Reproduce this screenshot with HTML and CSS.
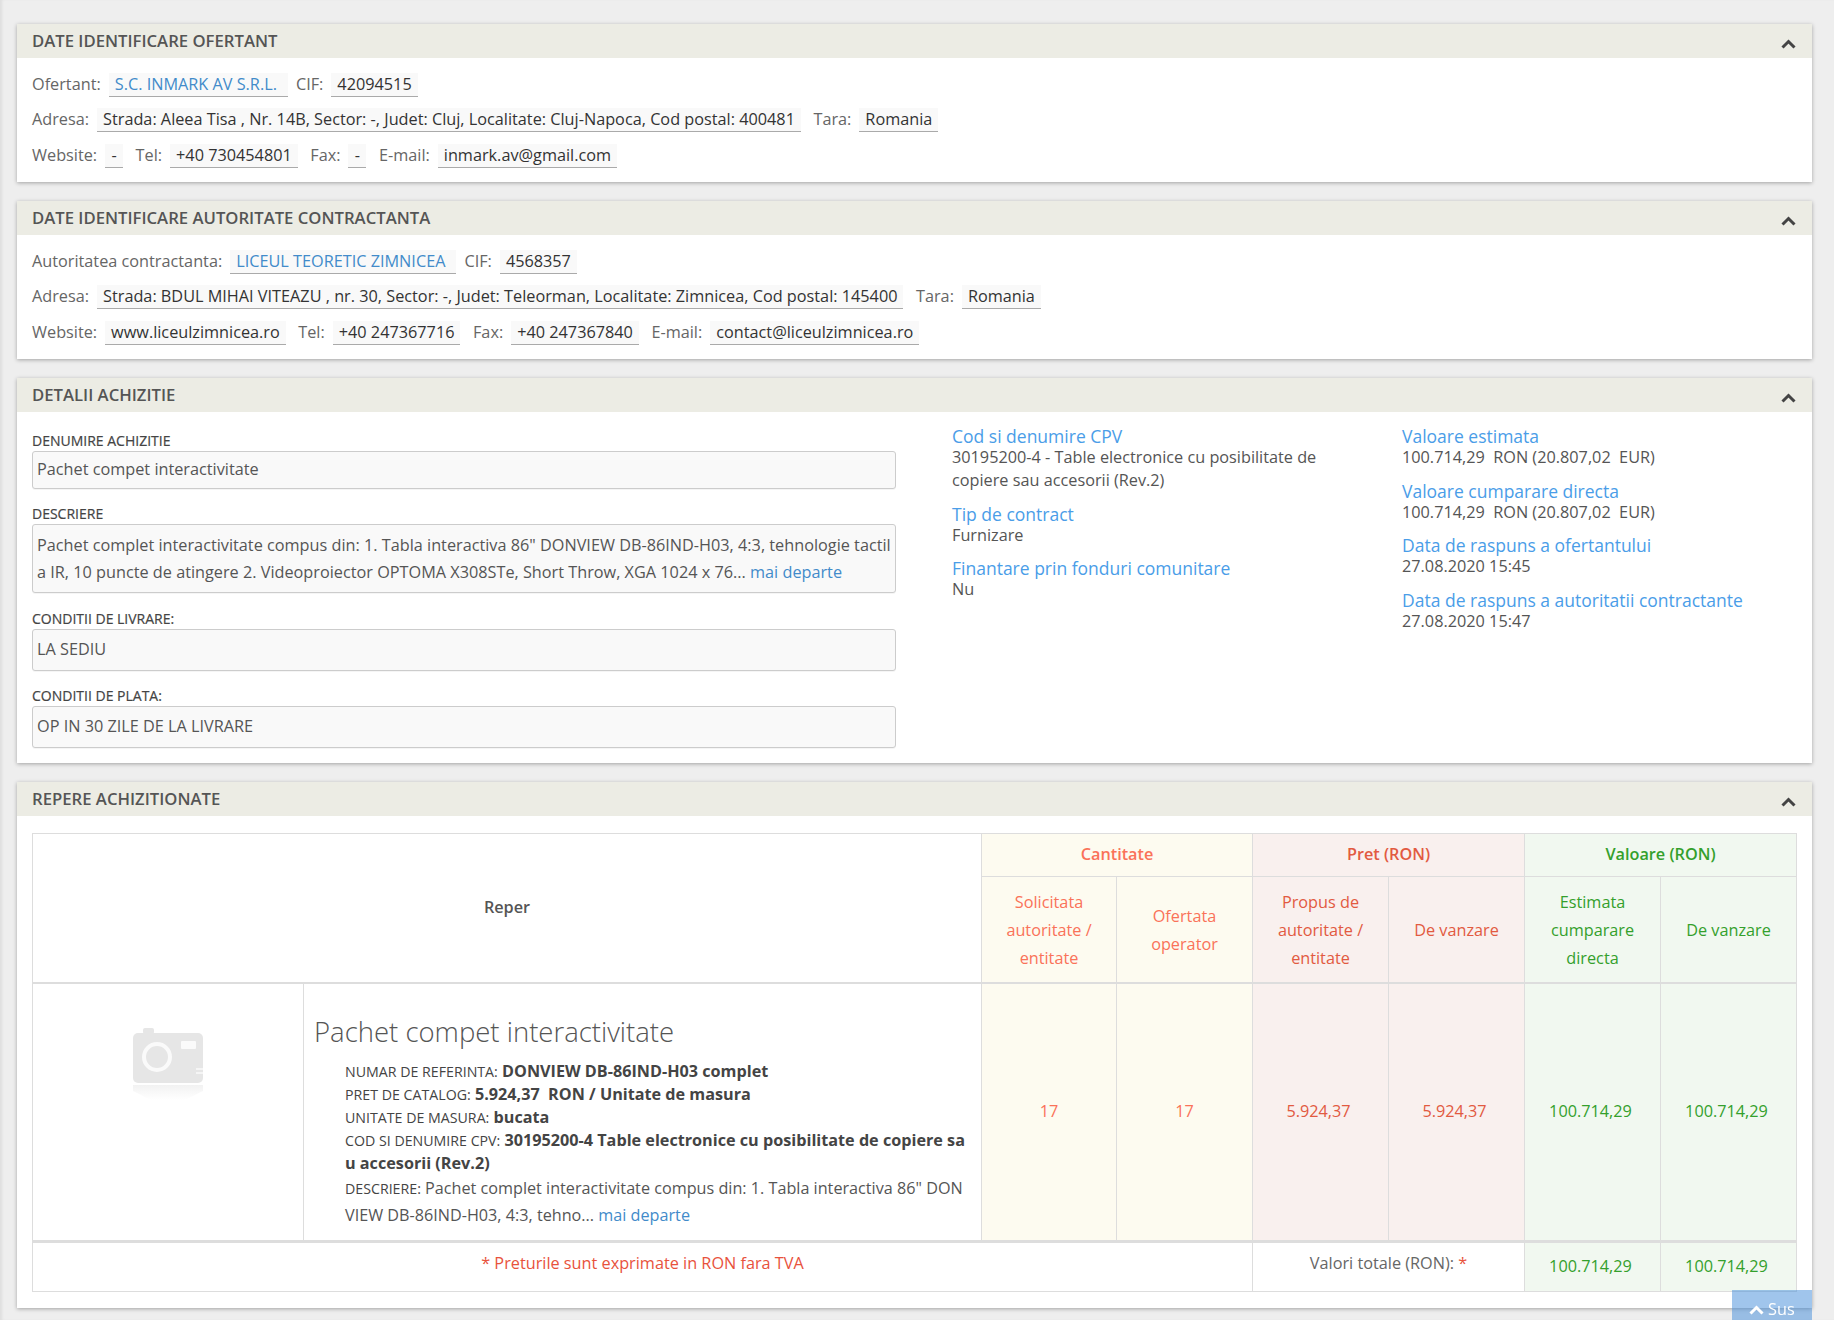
FILE: index.html
```html
<!DOCTYPE html>
<html lang="ro">
<head>
<meta charset="utf-8">
<title>Achizitie</title>
<link rel="stylesheet" href="styles.css">
</head>
<body>
<main class="page">

<section class="panel">
  <header class="panel-head"><h2>DATE IDENTIFICARE OFERTANT</h2><svg class="chev" viewBox="0 0 15 10"><path d="M1.5 8.5 7.5 2.5l6 6"/></svg></header>
  <div class="panel-body info">
    <div class="row"><span class="lbl">Ofertant:</span><a class="pill pill-link">S.C. INMARK AV S.R.L.</a><span class="lbl">CIF:</span><span class="pill">42094515</span></div>
    <div class="row"><span class="lbl">Adresa:</span><span class="pill">Strada: Aleea Tisa , Nr. 14B, Sector: -, Judet: Cluj, Localitate: Cluj-Napoca, Cod postal: 400481</span><span class="lbl">Tara:</span><span class="pill">Romania</span></div>
    <div class="row"><span class="lbl">Website:</span><span class="pill">-</span><span class="lbl">Tel:</span><span class="pill">+40 730454801</span><span class="lbl">Fax:</span><span class="pill">-</span><span class="lbl">E-mail:</span><span class="pill">inmark.av@gmail.com</span></div>
  </div>
</section>

<section class="panel">
  <header class="panel-head"><h2>DATE IDENTIFICARE AUTORITATE CONTRACTANTA</h2><svg class="chev" viewBox="0 0 15 10"><path d="M1.5 8.5 7.5 2.5l6 6"/></svg></header>
  <div class="panel-body info">
    <div class="row"><span class="lbl">Autoritatea contractanta:</span><a class="pill pill-link">LICEUL TEORETIC ZIMNICEA</a><span class="lbl">CIF:</span><span class="pill">4568357</span></div>
    <div class="row"><span class="lbl">Adresa:</span><span class="pill">Strada: BDUL MIHAI VITEAZU , nr. 30, Sector: -, Judet: Teleorman, Localitate: Zimnicea, Cod postal: 145400</span><span class="lbl">Tara:</span><span class="pill">Romania</span></div>
    <div class="row"><span class="lbl">Website:</span><span class="pill">www.liceulzimnicea.ro</span><span class="lbl">Tel:</span><span class="pill">+40 247367716</span><span class="lbl">Fax:</span><span class="pill">+40 247367840</span><span class="lbl">E-mail:</span><span class="pill">contact@liceulzimnicea.ro</span></div>
  </div>
</section>

<section class="panel">
  <header class="panel-head"><h2>DETALII ACHIZITIE</h2><svg class="chev" viewBox="0 0 15 10"><path d="M1.5 8.5 7.5 2.5l6 6"/></svg></header>
  <div class="panel-body details">
    <div class="fields">
      <label class="f-label">DENUMIRE ACHIZITIE</label>
      <div class="box box-name">Pachet compet interactivitate</div>
      <label class="f-label">DESCRIERE</label>
      <div class="box box-desc">Pachet complet interactivitate compus din: 1. Tabla interactiva 86" DONVIEW DB-86IND-H03, 4:3, tehnologie tactila IR, 10 puncte de atingere 2. Videoproiector OPTOMA X308STe, Short Throw, XGA 1024 x 76... <a class="more">mai departe</a></div>
      <label class="f-label">CONDITII DE LIVRARE:</label>
      <div class="box box-cond">LA SEDIU</div>
      <label class="f-label">CONDITII DE PLATA:</label>
      <div class="box box-cond">OP IN 30 ZILE DE LA LIVRARE</div>
    </div>
    <div class="facts facts-a">
      <div class="fact"><h4>Cod si denumire CPV</h4><p>30195200-4 - Table electronice cu posibilitate de copiere sau accesorii (Rev.2)</p></div>
      <div class="fact"><h4>Tip de contract</h4><p>Furnizare</p></div>
      <div class="fact"><h4>Finantare prin fonduri comunitare</h4><p>Nu</p></div>
    </div>
    <div class="facts facts-b">
      <div class="fact"><h4>Valoare estimata</h4><p>100.714,29 &nbsp;RON (20.807,02 &nbsp;EUR)</p></div>
      <div class="fact"><h4>Valoare cumparare directa</h4><p>100.714,29 &nbsp;RON (20.807,02 &nbsp;EUR)</p></div>
      <div class="fact"><h4>Data de raspuns a ofertantului</h4><p>27.08.2020 15:45</p></div>
      <div class="fact"><h4>Data de raspuns a autoritatii contractante</h4><p>27.08.2020 15:47</p></div>
    </div>
  </div>
</section>

<section class="panel">
  <header class="panel-head"><h2>REPERE ACHIZITIONATE</h2><svg class="chev" viewBox="0 0 15 10"><path d="M1.5 8.5 7.5 2.5l6 6"/></svg></header>
  <div class="panel-body items">
    <table class="grid">
      <colgroup><col class="c-img"><col class="c-prod"><col class="c-first"><col class="c-n"><col class="c-n"><col class="c-n"><col class="c-n"><col class="c-n"></colgroup>
      <thead>
        <tr class="r-top">
          <th class="reper" colspan="2" rowspan="2">Reper</th>
          <th class="q" colspan="2">Cantitate</th>
          <th class="p" colspan="2">Pret (RON)</th>
          <th class="v" colspan="2">Valoare (RON)</th>
        </tr>
        <tr class="r-sub">
          <td class="q">Solicitata autoritate / entitate</td>
          <td class="q">Ofertata operator</td>
          <td class="p">Propus de autoritate / entitate</td>
          <td class="p">De vanzare</td>
          <td class="v">Estimata cumparare directa</td>
          <td class="v">De vanzare</td>
        </tr>
      </thead>
      <tbody>
        <tr class="r-data">
          <td class="img-cell">
            <svg class="camera" viewBox="0 0 70 74">
              <defs><linearGradient id="fade" x1="0" y1="0" x2="0" y2="1"><stop offset="0" stop-color="#f2f2f2"/><stop offset="1" stop-color="#fff"/></linearGradient></defs>
              <rect x="10" y="0" width="11" height="6" rx="2" fill="#e6e6e6"/>
              <rect x="0" y="5" width="70" height="50" rx="5" fill="#e6e6e6"/>
              <circle cx="24" cy="29" r="13" fill="none" stroke="#fafafa" stroke-width="4"/>
              <rect x="48" y="13" width="15" height="8" rx="1" fill="#fafafa"/>
              <path d="M63 41h7M63 45h7" stroke="#fafafa" stroke-width="1.5"/>
              <path d="M0 57h70v6c-8 4-18 9-18 9H18S8 67 0 63z" fill="url(#fade)"/>
            </svg>
          </td>
          <td class="prod-cell">
            <h3>Pachet compet interactivitate</h3>
            <div class="spec">
              <div><span class="k">NUMAR DE REFERINTA:</span> <b>DONVIEW DB-86IND-H03 complet</b></div>
              <div><span class="k">PRET DE CATALOG:</span> <b>5.924,37 &nbsp;RON / Unitate de masura</b></div>
              <div><span class="k">UNITATE DE MASURA:</span> <b>bucata</b></div>
              <div><span class="k">COD SI DENUMIRE CPV:</span> <b>30195200-4 Table electronice cu posibilitate de copiere sau accesorii (Rev.2)</b></div>
              <div class="spec-desc"><span class="k">DESCRIERE:</span> Pachet complet interactivitate compus din: 1. Tabla interactiva 86" DONVIEW DB-86IND-H03, 4:3, tehno... <a class="more">mai departe</a></div>
            </div>
          </td>
          <td class="q num">17</td>
          <td class="q num">17</td>
          <td class="p num num-shift">5.924,37</td>
          <td class="p num num-shift">5.924,37</td>
          <td class="v num num-shift">100.714,29</td>
          <td class="v num num-shift">100.714,29</td>
        </tr>
      </tbody>
      <tfoot>
        <tr class="r-foot">
          <td class="note" colspan="4">* Preturile sunt exprimate in RON fara TVA</td>
          <td class="totals" colspan="2">Valori totale (RON): <span class="star">*</span></td>
          <td class="v num num-shift">100.714,29</td>
          <td class="v num num-shift">100.714,29</td>
        </tr>
      </tfoot>
    </table>
  </div>
</section>

</main>
<a class="to-top"><svg class="to-top-icon" viewBox="0 0 15 10"><path d="M1.5 8.5 7.5 2.5l6 6"/></svg>Sus</a>
</body>
</html>
```
FILE: styles.css
```css
* { box-sizing: border-box; }
html, body { margin: 0; padding: 0; }
body {
  background: #eeeeee;
  color: #444;
  font-family: "Open Sans", "Liberation Sans", sans-serif;
  font-size: 16.25px;
  height: 1320px;
  overflow: hidden;
}
.page {
  height: 1320px;
  padding: 23.9px 22px 0 17px;
  box-shadow: inset 3px 0 3px -1px rgba(0, 0, 0, .07);
}
.panel {
  background: #fff;
  margin-bottom: 18.5px;
  box-shadow: 0 1px 4px rgba(0, 0, 0, .32);
}
.panel-head {
  height: 34.5px;
  background: #ecece4;
  padding: 0 16px 0 15px;
  display: flex;
  align-items: center;
  justify-content: space-between;
}
.panel-head h2 {
  margin: 0;
  padding-bottom: 1px;
  font-size: 16.7px;
  font-weight: 600;
  color: #555;
  line-height: 32px;
}
.chev {
  width: 15px;
  height: 10px;
  margin: 6px 0 0;
  fill: none;
  stroke: #444;
  stroke-width: 3;
}
.panel-body.info { padding: 14.6px 15px; height: 124px; }
.row {
  display: flex;
  align-items: flex-start;
  height: 24px;
  margin-bottom: 11.5px;
}
.row:last-child { margin-bottom: 0; }
.lbl { color: #666; margin-right: 8px; white-space: pre; line-height: 22px; }
.pill {
  background: #f9f9f9;
  border-bottom: 1px solid #aaa;
  color: #333;
  padding: 0 6px;
  min-width: 18px;
  text-align: center;
  height: 24px;
  line-height: 22px;
  margin-right: 12.5px;
  white-space: pre;
}
.pill-link { color: #428bca; padding-right: 11px; margin-right: 8px; }

.details { display: flex; height: 351px; padding: 15.1px 15px 0; }
.fields { width: 864px; flex: none; padding-top: 4.5px; }
.f-label {
  display: block;
  color: #444;
  font-size: 14px;
  font-weight: 400;
  line-height: 18px;
  height: 19px;
  -webkit-text-stroke: .2px #444;
}
.box {
  background: #f9f9f9;
  border: 1px solid #ccc;
  border-radius: 3px;
  padding: 0 3px 0 4px;
  color: #555;
  word-break: break-all;
  box-shadow: 0 1px 0 rgba(0,0,0,.04);
}
.box-name { height: 38px; line-height: 35px; margin-bottom: 16px; }
.box-desc { height: 69px; line-height: 27px; padding-top: 7px; margin-bottom: 17px; }
.box-cond { height: 42px; line-height: 38px; margin-bottom: 16px; }
.more { color: #428bca; }

.facts { flex: none; }
.facts-a { width: 450px; margin-left: 56px; padding-right: 60px; }
.facts-b { width: 400px; }
.fact { margin-bottom: 12.5px; }
.fact h4 {
  margin: 0;
  font-size: 17.5px;
  font-weight: 400;
  color: #4a9de8;
  line-height: 19px;
  height: 19px;
}
.fact p { margin: 0; color: #555; line-height: 23px; }

.items { padding: 16.5px 15px 16px; }
.grid {
  width: 1764px;
  table-layout: fixed;
  border-collapse: collapse;
  font-size: 16.25px;
}
.c-img { width: 271px; }
.c-prod { width: 678px; }
.c-first { width: 135px; }
.c-n { width: 136px; }
.grid th, .grid td { border: 1px solid #ddd; padding: 0; text-align: center; font-weight: 400; }
.r-top { height: 43px; }
.r-top th { font-weight: 600; padding-bottom: 2px; }
.r-sub { height: 107px; }
.r-sub td { line-height: 28px; padding: 1px 10px 0; }
.grid thead tr:last-child td, .grid .reper { border-bottom: 2px solid #ddd; }
.r-data { height: 258px; }
.grid .reper { font-weight: 600; color: #555; }
.q { background: #fdfbf0; color: #fa7259; }
.p { background: #f9f0ee; color: #e25a41; }
.v { background: #f1f8f0; color: #34a02c; }
.grid tbody td { border-bottom: 3px solid #ddd; }
.grid .num { padding-bottom: 2px; }
.grid .num-shift { padding-right: 4px; }
.grid .img-cell { vertical-align: top; padding-top: 44px; }
.camera { display: block; width: 70px; height: 74px; margin: 0 auto; }
.grid .prod-cell {
  vertical-align: top;
  text-align: left;
  padding: 30px 10px 0 10px;
  word-break: break-all;
}
.prod-cell h3 {
  margin: 0 0 10px;
  font-size: 27.5px;
  font-weight: 300;
  line-height: 36px;
  color: #555;
}
.spec { padding-left: 31px; line-height: 23px; color: #555; font-size: 16.2px; }
.spec b { font-weight: 700; color: #444; }
.k { font-size: 14.2px; color: #444; }
.spec-desc { line-height: 27px; }
.r-foot { height: 50px; }
.grid .note, .grid .totals { background: #fff; vertical-align: top; padding-top: 7px; line-height: 26px; }
.note { color: #e8523c; }
.totals { color: #666; }
.star { color: #e8523c; }

.to-top {
  position: fixed;
  right: 22px;
  bottom: 0;
  width: 80px;
  height: 30px;
  background: rgba(66, 139, 218, .5);
  color: #fff;
  font-size: 16.25px;
  padding-left: 17px;
  display: flex;
  align-items: center;
  padding-top: 8px;
}
.to-top-icon {
  width: 15px;
  height: 10px;
  margin-right: 4px;
  margin-top: 2px;
  fill: none;
  stroke: #fff;
  stroke-width: 3;
}
```
